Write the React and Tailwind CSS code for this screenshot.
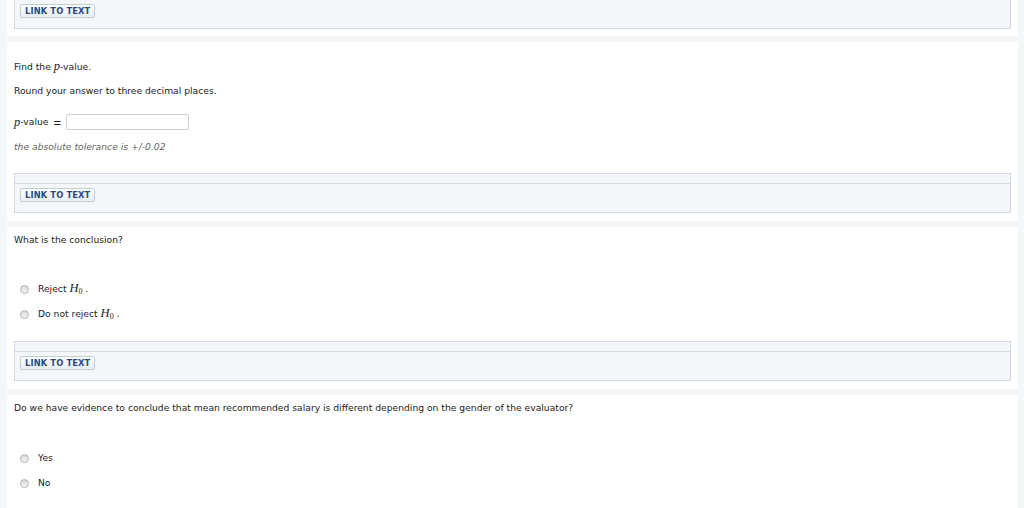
const font = { fontFamily: '"DejaVu Sans", Verdana, sans-serif' };

const LinkButton = () => (
  <span className="flex h-[14px] w-fit items-center rounded-[2px] border border-[#c3cbd5] bg-gradient-to-b from-[#ffffff] to-[#e9eef4] px-[4px] text-[8.4px] font-bold leading-none tracking-[0.1px] text-[#2c4b7c]">
    LINK TO TEXT
  </span>
);

const TextPanel = () => (
  <div className="h-[40px] border border-[#d3dae3] bg-[#f4f7fa]">
    <div className="h-[10px] border-b border-[#d3dae3]" />
    <div className="pl-[5px] pt-[4px]">
      <LinkButton />
    </div>
  </div>
);

const Radio = ({ children }) => (
  <div className="flex h-[14px] items-center pl-[6px]">
    <span className="h-[9px] w-[9px] shrink-0 rounded-full border border-[#b4b4b4] bg-gradient-to-b from-[#d6d6d6] to-[#f7f7f7]" />
    <span className="ml-[9px] leading-[14px]">{children}</span>
  </div>
);

const H0 = () => (
  <span className="font-['Liberation_Serif',serif] text-[12.5px] leading-none">
    <i>H</i>
    <sub className="text-[8px]">0</sub>
  </span>
);

const P = () => (
  <i className="font-['Liberation_Serif',serif] text-[12.5px] leading-none">p</i>
);

export default function App() {
  return (
    <div
      className="flex h-[508px] flex-col gap-[6px] overflow-hidden bg-[#f4f7fa] pl-[7px] pr-[6px] text-[9.2px] text-[#1c1c1c]"
      style={font}
    >
      <div className="h-[36px] shrink-0 bg-white px-[7px]">
        <div className="h-[29px] border-x border-b border-[#d3dae3] bg-[#f4f7fa] pl-[5px] pt-[4px]">
          <LinkButton />
        </div>
      </div>

      <div className="h-[179px] shrink-0 bg-white px-[7px] pt-[18px]">
        <p className="h-[14px] leading-[14px]">
          Find the <P />-value.
        </p>
        <p className="mt-[10px] h-[14px] leading-[14px]">Round your answer to three decimal places.</p>
        <div className="mt-[16px] flex h-[16px] items-center">
          <P />
          <span>-value</span>
          <span className="ml-[5px] font-['Liberation_Sans',sans-serif] text-[13px] leading-none">=</span>
          <span className="ml-[5px] h-[16px] w-[123px] rounded-[2px] border border-[#cfcfcf] bg-white" />
        </div>
        <p className="mt-[10px] h-[14px] italic leading-[14px] text-[#666]">the absolute tolerance is +/-0.02</p>
        <div className="mt-[19px]">
          <TextPanel />
        </div>
      </div>

      <div className="h-[162px] shrink-0 bg-white px-[7px] pt-[6px]">
        <p className="h-[14px] leading-[14px]">What is the conclusion?</p>
        <div className="mt-[35px] flex flex-col gap-[11px]">
          <Radio>
            Reject <H0 /> .
          </Radio>
          <Radio>
            Do not reject <H0 /> .
          </Radio>
        </div>
        <div className="mt-[20px]">
          <TextPanel />
        </div>
      </div>

      <div className="flex-1 bg-white px-[7px] pt-[6px]">
        <p className="h-[14px] leading-[14px]">
          Do we have evidence to conclude that mean recommended salary is different depending on the gender of the evaluator?
        </p>
        <div className="mt-[36px] flex flex-col gap-[11px]">
          <Radio>Yes</Radio>
          <Radio>No</Radio>
        </div>
      </div>
    </div>
  );
}
